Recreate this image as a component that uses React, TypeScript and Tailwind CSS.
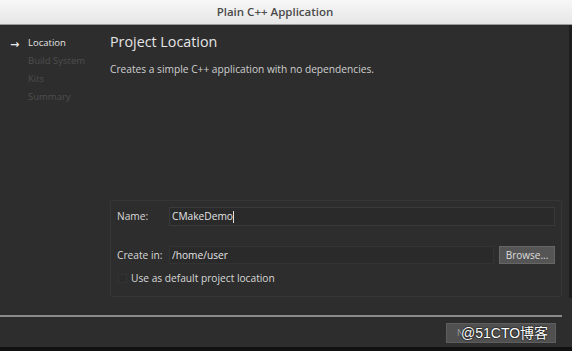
import React from "react";

const steps = ["Location", "Build System", "Kits", "Summary"];

export default function App() {
  return (
    <div
      className="w-[572px] h-[351px] flex flex-col bg-[#2d2d2d] overflow-hidden"
      style={{ fontFamily: '"Open Sans", "DejaVu Sans", sans-serif' }}
    >
      <div className="h-[25px] shrink-0 flex items-center justify-center bg-gradient-to-b from-[#f7f7f7] to-[#e6e6e6] border-b border-[#9a9a9a]">
        <span className="text-[11.5px] font-semibold text-[#4a4a4a] pr-[22px]">Plain C++ Application</span>
      </div>

      <div className="flex flex-1 border-r-[3px] border-[#1e1e1e]">
        <div className="w-[110px] shrink-0 pt-[11px] pl-[10px] flex flex-col gap-[4px]">
          {steps.map((s, i) => (
            <div key={s} className="flex items-center h-[14px] text-[9.5px]">
              <span className="w-[18px] text-[#e8e8e8] text-[11px] font-bold leading-none">{i === 0 ? "→" : ""}</span>
              <span className={i === 0 ? "text-[#e4e4e4]" : "text-[#4e4e4e]"}>{s}</span>
            </div>
          ))}
        </div>

        <div className="flex-1 flex flex-col pt-[7px] pr-[4px]">
          <div className="text-[14.3px] text-[#e6e6e6] font-medium leading-[20px]">Project Location</div>
          <div className="text-[10.2px] text-[#cfcfcf] mt-[10px]">Creates a simple C++ application with no dependencies.</div>

          <div className="mt-[123px] mr-[3px] border border-[#363636] rounded-[2px] pl-[6px] pr-[6px] pt-[6px] pb-[10px] flex flex-col">
            <div className="flex items-center h-[19px]">
              <span className="w-[52px] text-[10.2px] text-[#d8d8d8]">Name:</span>
              <div className="flex-1 h-[19px] bg-[#2a2a2a] border border-[#3a3a3a] flex items-center pl-[2px] text-[10.2px] text-[#e4e4e4]">
                CMakeDemo<span className="w-px h-[12px] bg-[#e0e0e0]" />
              </div>
            </div>
            <div className="flex items-center h-[18px] mt-[20px]">
              <span className="w-[52px] text-[10.2px] text-[#d8d8d8]">Create in:</span>
              <div className="flex-1 h-[18px] bg-[#2a2a2a] border border-[#333] flex items-center pl-[2px] text-[10.2px] text-[#e4e4e4]">
                /home/user
              </div>
              <div className="ml-[5px] w-[56px] h-[18px] bg-[#555] border border-[#666] flex items-center justify-center text-[10px] text-[#ddd]">
                Browse...
              </div>
            </div>
            <div className="flex items-center mt-[6px] h-[16px]">
              <span className="w-[9px] h-[9px] border border-[#333] bg-[#2b2b2b] ml-[1px]" />
              <span className="ml-[4px] text-[10.2px] text-[#d8d8d8]">Use as default project location</span>
            </div>
          </div>
        </div>
      </div>

      <div className="h-[2px] bg-[#8a8a8a] mt-[17px] mr-[10px] shrink-0" />
      <div className="h-[34px] shrink-0 flex items-start justify-end pr-[16px] pt-[6px] border-b-[4px] border-[#111]">
        <div className="relative w-[110px] h-[20px] bg-[#505050] border border-[#5e5e5e] flex items-center pl-[10px]">
          <span className="text-[9px] text-[#9a9a9a]">N</span>
          <span
            className="absolute left-[14px] top-[-1px] text-[14px] text-white leading-[20px] whitespace-nowrap"
            style={{ fontFamily: '"Liberation Sans", "Noto Sans CJK SC", sans-serif', textShadow: "0 0 2px #000, 0 0 1px #000" }}
          >
            @51CTO博客
          </span>
        </div>
      </div>
    </div>
  );
}
